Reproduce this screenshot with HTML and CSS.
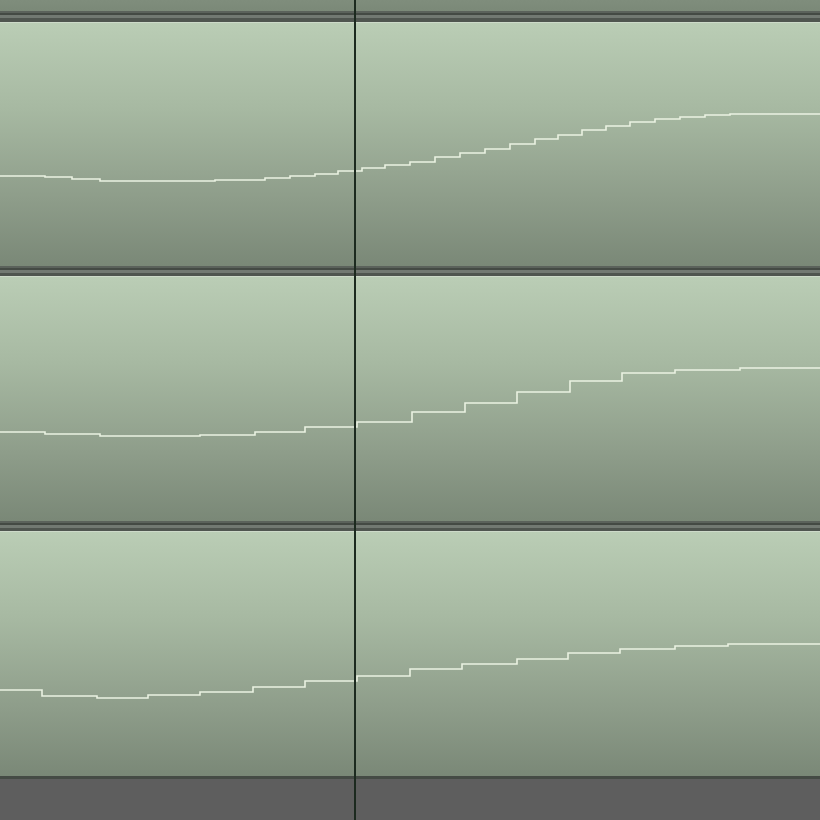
FILE: index.html
```html
<!DOCTYPE html>
<html lang="en">
<head>
<meta charset="utf-8">
<title>Envelope lanes</title>
<link rel="stylesheet" href="styles.css">
</head>
<body>
<div class="arrange">
	<div class="lane-tail"></div>
	<div class="divider divider-top"></div>

	<div class="lane lane-first">
		<div class="item"></div>
		<div class="item item-next"></div>
		<svg class="env" viewBox="0 0 820 244" preserveAspectRatio="none">
			<path d="M0 154 H45 V155 H72 V157 H100 V159 H215 V158 H265 V156 H290 V154 H315 V152 H338 V149 H362 V146 H385 V143 H410 V140 H435 V135 H460 V131 H485 V127 H510 V122 H535 V117 H558 V113 H582 V108 H606 V104 H630 V100 H655 V97 H680 V95 H705 V93 H730 V92 H820"/>
		</svg>
	</div>
	<div class="divider"></div>

	<div class="lane">
		<div class="item"></div>
		<div class="item item-next"></div>
		<svg class="env" viewBox="0 0 820 245" preserveAspectRatio="none">
			<path d="M0 156 H45 V158 H100 V160 H200 V159 H255 V156 H305 V151 H357 V146 H412 V136 H465 V127 H517 V116 H570 V105 H622 V97 H675 V94 H740 V92 H820"/>
		</svg>
	</div>
	<div class="divider"></div>

	<div class="lane">
		<div class="item"></div>
		<div class="item item-next"></div>
		<svg class="env" viewBox="0 0 820 245" preserveAspectRatio="none">
			<path d="M0 159 H42 V165 H97 V167 H148 V164 H200 V161 H253 V156 H305 V150 H357 V145 H410 V138 H462 V133 H517 V128 H568 V122 H620 V118 H675 V115 H728 V113 H820"/>
		</svg>
	</div>
	<div class="floor"></div>

	<div class="cursor"></div>
</div>
</body>
</html>
```

FILE: styles.css
```css
* {
	margin: 0;
	padding: 0;
	box-sizing: border-box;
}
html, body {
	width: 820px;
	height: 820px;
	overflow: hidden;
	background: #5e5e5e;
}
.arrange {
	position: relative;
	display: flex;
	flex-direction: column;
	width: 820px;
	height: 820px;
}
/* bottom of the lane above the view */
.lane-tail {
	height: 11px;
	background: linear-gradient(#7f8d7c, #7b8978);
}
.divider {
	height: 10px;
	background: linear-gradient(
		#5b625b 0, #5b625b 2px,
		#444a44 2px, #444a44 4px,
		#727972 4px, #727972 7px,
		#4f554f 7px, #4f554f 10px);
}
.divider-top {
	height: 11px;
}
.lane {
	display: grid;
	grid-template-columns: 355px 1fr;
	height: 245px;
}
.lane-first {
	height: 244px;
}
.item {
	grid-row: 1;
	grid-column: 1;
	border-top: 1px solid #cddac9;
	background: linear-gradient(#bacdb5 0%, #a7b9a2 35%, #8e9d8a 72%, #7a8877 100%);
}
.item-next {
	grid-column: 2;
	border-left: 1px solid #c3d2bf;
}
.env {
	grid-row: 1;
	grid-column: 1 / -1;
	width: 100%;
	height: 100%;
	display: block;
}
.env path {
	fill: none;
	stroke: #eaf2e2;
	stroke-width: 1.6;
}
.floor {
	flex: 1;
	border-top: 3px solid #454b45;
	background: #5e5e5e;
}
/* edit cursor */
.cursor {
	position: absolute;
	top: 0;
	bottom: 0;
	left: 354px;
	width: 2px;
	background: #1c2a1f;
}
```
